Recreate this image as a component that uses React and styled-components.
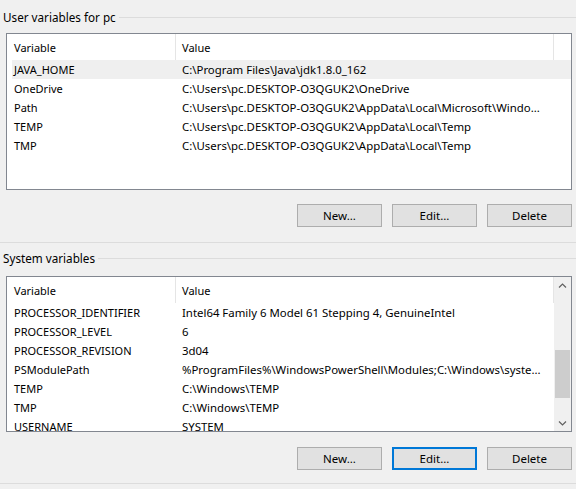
import React from 'react';
import styled, { createGlobalStyle } from 'styled-components';

const Global = createGlobalStyle`
  html, body { margin: 0; padding: 0; background: #f0f0f0; }
  body {
    font-family: "Noto Sans", "Open Sans", sans-serif;
    font-size: 11px;
    color: #000;
  }
`;

const Page = styled.div`
  width: 576px;
  height: 489px;
  overflow: hidden;
  background: #f0f0f0;
  display: flex;
  flex-direction: column;
`;

const GroupTitle = styled.div`
  display: flex;
  align-items: center;
  height: 16px;
  margin-top: ${(p) => p.$top}px;
  padding-left: 3px;
  gap: 3px;
  font-size: 11.7px;
  white-space: nowrap;
  &::after {
    content: '';
    flex: 1;
    height: 1px;
    background: #dcdcdc;
  }
`;

const ListBox = styled.div`
  display: flex;
  height: ${(p) => p.$height}px;
  margin: ${(p) => p.$top}px 4px 0 6px;
  border: 1px solid #828790;
  background: #fff;
  box-sizing: border-box;
  overflow: hidden;
`;

const ListContent = styled.div`
  flex: 1;
  padding-left: 5px;
  overflow: hidden;
`;

const Grid = styled.div`
  display: grid;
  grid-template-columns: 164px 378px;
  height: ${(p) => (p.$header ? 26 : 19)}px;
  background: ${(p) => (p.$selected ? '#efefef' : 'transparent')};
`;

const HeadCell = styled.div`
  line-height: 27px;
  padding-left: ${(p) => (p.$value ? 6 : 2)}px;
  border-right: 1px solid #e5e5e5;
  white-space: nowrap;
  overflow: hidden;
`;

const Cell = styled.div`
  line-height: 19px;
  padding-left: ${(p) => (p.$value ? 6 : 2)}px;
  font-size: ${(p) => (p.$value ? 11.4 : 11)}px;
  white-space: nowrap;
  overflow: hidden;
`;

const ScrollBar = styled.div`
  width: 17px;
  display: flex;
  flex-direction: column;
  background: #f0f0f0;
`;

const Arrow = styled.div`
  height: 17px;
  display: flex;
  align-items: center;
  justify-content: center;
`;

const Track = styled.div`
  flex: 1;
  display: flex;
  flex-direction: column;
`;

const Thumb = styled.div`
  margin: 0 1px;
  background: #cdcdcd;
`;

const ButtonRow = styled.div`
  display: flex;
  justify-content: flex-end;
  gap: 10px;
  padding-right: 4px;
  margin-top: ${(p) => p.$top}px;
`;

const Button = styled.button`
  width: 85px;
  height: 23px;
  box-sizing: border-box;
  padding: 0;
  background: #e1e1e1;
  border: ${(p) => (p.$default ? '2px solid #0078d7' : '1px solid #adadad')};
  font: inherit;
  font-size: 11.5px;
  color: #000;
`;

const Separator = styled.div`
  height: 1px;
  background: #dcdcdc;
  margin-top: ${(p) => p.$top}px;
`;

const userVars = [
  ['JAVA_HOME', 'C:\\Program Files\\Java\\jdk1.8.0_162'],
  ['OneDrive', 'C:\\Users\\pc.DESKTOP-O3QGUK2\\OneDrive'],
  ['Path', 'C:\\Users\\pc.DESKTOP-O3QGUK2\\AppData\\Local\\Microsoft\\Windo...'],
  ['TEMP', 'C:\\Users\\pc.DESKTOP-O3QGUK2\\AppData\\Local\\Temp'],
  ['TMP', 'C:\\Users\\pc.DESKTOP-O3QGUK2\\AppData\\Local\\Temp'],
];

const sysVars = [
  ['PROCESSOR_IDENTIFIER', 'Intel64 Family 6 Model 61 Stepping 4, GenuineIntel'],
  ['PROCESSOR_LEVEL', '6'],
  ['PROCESSOR_REVISION', '3d04'],
  ['PSModulePath', '%ProgramFiles%\\WindowsPowerShell\\Modules;C:\\Windows\\syste...'],
  ['TEMP', 'C:\\Windows\\TEMP'],
  ['TMP', 'C:\\Windows\\TEMP'],
  ['USERNAME', 'SYSTEM'],
];

const Chevron = ({ down }) => (
  <svg width="9" height="6" viewBox="0 0 9 6">
    <path
      d={down ? 'M1 1.5 L4.5 5 L8 1.5' : 'M1 4.5 L4.5 1 L8 4.5'}
      fill="none"
      stroke="#606060"
      strokeWidth="1.2"
    />
  </svg>
);

function VarList({ rows, top, height, selected, scroll }) {
  return (
    <ListBox $top={top} $height={height}>
      <ListContent>
        <Grid $header>
          <HeadCell>Variable</HeadCell>
          <HeadCell $value>Value</HeadCell>
        </Grid>
        {rows.map(([k, v], i) => (
          <Grid key={k + i} $selected={i === selected}>
            <Cell>{k}</Cell>
            <Cell $value>{v}</Cell>
          </Grid>
        ))}
      </ListContent>
      {scroll && (
        <ScrollBar>
          <Arrow>
            <Chevron />
          </Arrow>
          <Track>
            <Thumb style={{ marginTop: scroll.offset, height: scroll.size }} />
          </Track>
          <Arrow>
            <Chevron down />
          </Arrow>
        </ScrollBar>
      )}
    </ListBox>
  );
}

export default function App() {
  return (
    <Page>
      <Global />
      <GroupTitle $top={9}>User variables for pc</GroupTitle>
      <VarList rows={userVars} top={8} height={157} selected={0} />
      <ButtonRow $top={14}>
        <Button>New...</Button>
        <Button>Edit...</Button>
        <Button>Delete</Button>
      </ButtonRow>
      <Separator $top={15} />
      <GroupTitle $top={7}>System variables</GroupTitle>
      <VarList rows={sysVars} top={10} height={156} scroll={{ offset: 56, size: 48 }} />
      <ButtonRow $top={15}>
        <Button>New...</Button>
        <Button $default>Edit...</Button>
        <Button>Delete</Button>
      </ButtonRow>
      <Separator $top={13} />
    </Page>
  );
}
